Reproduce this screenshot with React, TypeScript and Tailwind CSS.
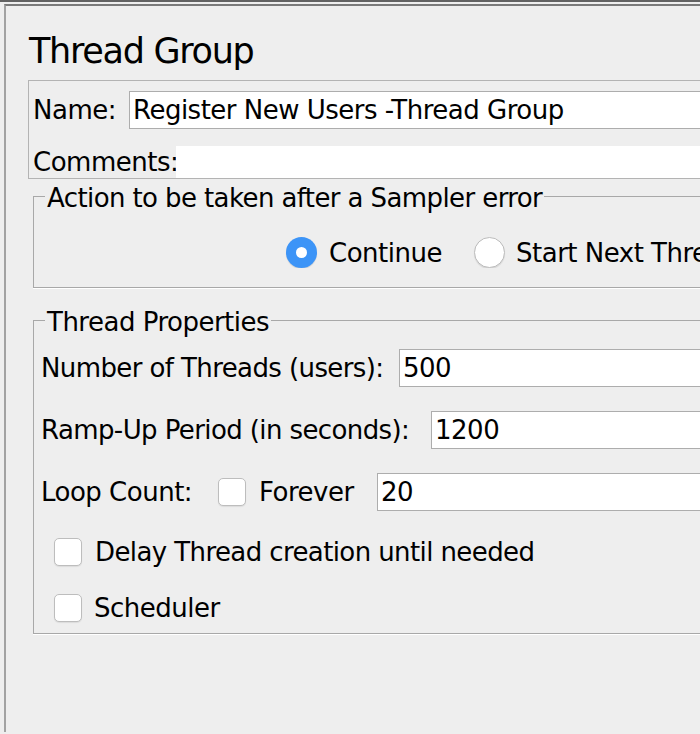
import React from "react";

const font = { fontFamily: '"DejaVu Sans", "Liberation Sans", sans-serif' };

function Checkbox() {
  return (
    <div className="w-[28px] h-[28px] shrink-0 rounded-[5px] bg-white border border-[#bdbdbd] shadow-[0_1px_1px_rgba(0,0,0,0.08)]" />
  );
}

function Field({ value, className }: { value: string; className?: string }) {
  return (
    <div
      className={
        "h-[38px] bg-white border border-[#adadad] pl-[3px] flex items-center text-[26px] leading-[30px] tracking-[-0.5px] text-black whitespace-nowrap overflow-hidden " +
        (className ?? "")
      }
    >
      {value}
    </div>
  );
}

export default function App() {
  return (
    <div
      className="w-[700px] h-[734px] overflow-hidden bg-[#eeeeee] border-t-2 border-[#626262] text-black"
      style={font}
    >
      <div className="mt-[2px] ml-[4px] h-[728px] border-t-2 border-l-2 border-t-[#7a7a7a] border-l-[#a2a2a2]">
        {/* Title */}
        <div className="mt-[25px] ml-[23px] h-[40px] text-[35px] leading-[40px] tracking-[-1.3px] whitespace-nowrap">
          Thread Group
        </div>

        {/* Name / Comments box */}
        <div className="mt-[9px] ml-[22px] w-[700px] h-[99px] border border-[#b3b3b3] pl-[4px] pt-[10px]">
          <div className="flex items-center h-[38px]">
            <div className="w-[96px] shrink-0 text-[26px] leading-[30px] tracking-[-0.5px]">Name:</div>
            <Field value="Register New Users -Thread Group" className="flex-1" />
          </div>
          <div className="flex items-center h-[32px] mt-[17px]">
            <div className="w-[143px] shrink-0 text-[26px] leading-[30px] tracking-[-0.5px]">Comments:</div>
            <div className="flex-1 h-[32px] bg-white" />
          </div>
        </div>

        {/* Action fieldset */}
        <fieldset className="ml-[27px] w-[690px] min-w-0 border border-[#a8a8a8] shadow-[0_1px_0_#ffffff] px-0 pb-[19px]">
          <legend className="ml-[11px] px-[2px] pt-[4px] text-[26px] leading-[30px] tracking-[-0.6px] whitespace-nowrap">
            Action to be taken after a Sampler error
          </legend>
          <div className="flex items-center h-[31px] mt-[24px] pl-[252px] whitespace-nowrap overflow-hidden">
            <div className="w-[31px] h-[31px] shrink-0 rounded-full bg-[#3c94f7] flex items-center justify-center shadow-[0_1px_1px_rgba(0,0,0,0.12)]">
              <div className="w-[11px] h-[11px] rounded-full bg-white" />
            </div>
            <span className="ml-[12px] w-[145px] shrink-0 text-[26px] leading-[30px] tracking-[-0.5px]">Continue</span>
            <div className="w-[31px] h-[31px] shrink-0 rounded-full bg-white border border-[#bcbcbc] shadow-[0_1px_1px_rgba(0,0,0,0.1)]" />
            <span className="ml-[11px] text-[26px] leading-[30px] tracking-[-0.5px]">Start Next Thread Loop</span>
          </div>
        </fieldset>

        {/* Thread Properties fieldset */}
        <fieldset className="mt-[15px] ml-[27px] w-[690px] min-w-0 border border-[#a8a8a8] shadow-[0_1px_0_#ffffff] px-0 pb-[11px]">
          <legend className="ml-[11px] px-[2px] pt-[4px] text-[26px] leading-[30px] tracking-[-0.5px] whitespace-nowrap">
            Thread Properties
          </legend>
          <div className="pl-[7px]">
            <div className="flex items-center h-[38px] mt-[12px]">
              <div className="w-[358px] shrink-0 text-[26px] leading-[30px] tracking-[-0.6px] whitespace-nowrap">
                Number of Threads (users):
              </div>
              <Field value="500" className="flex-1" />
            </div>
            <div className="flex items-center h-[38px] mt-[24px]">
              <div className="w-[390px] shrink-0 text-[26px] leading-[30px] tracking-[-0.6px] whitespace-nowrap">
                Ramp-Up Period (in seconds):
              </div>
              <Field value="1200" className="flex-1" />
            </div>
            <div className="flex items-center h-[38px] mt-[24px]">
              <div className="w-[177px] shrink-0 text-[26px] leading-[30px] tracking-[-0.5px] whitespace-nowrap">
                Loop Count:
              </div>
              <Checkbox />
              <span className="ml-[13px] w-[118px] shrink-0 text-[26px] leading-[30px] tracking-[-0.5px]">Forever</span>
              <Field value="20" className="flex-1" />
            </div>
            <div className="flex items-center h-[28px] mt-[27px] pl-[13px]">
              <Checkbox />
              <span className="ml-[13px] text-[26px] leading-[30px] tracking-[-0.6px] whitespace-nowrap">
                Delay Thread creation until needed
              </span>
            </div>
            <div className="flex items-center h-[28px] mt-[28px] pl-[13px]">
              <Checkbox />
              <span className="ml-[12px] text-[26px] leading-[30px] tracking-[-0.5px] whitespace-nowrap">
                Scheduler
              </span>
            </div>
          </div>
        </fieldset>
      </div>
    </div>
  );
}
